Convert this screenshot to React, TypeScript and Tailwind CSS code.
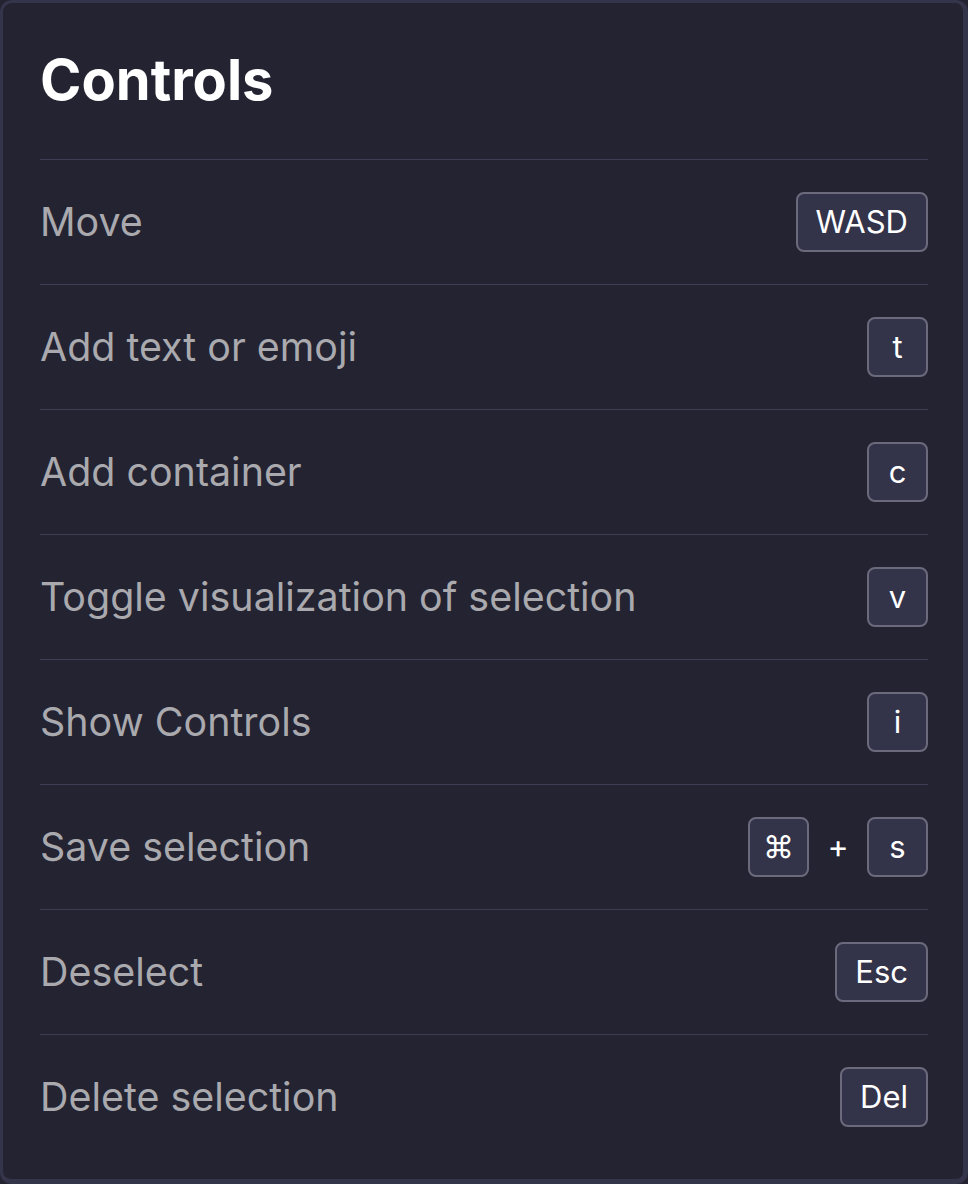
const rows: { label: string; keys: string[] }[] = [
  { label: 'Move', keys: ['WASD'] },
  { label: 'Add text or emoji', keys: ['t'] },
  { label: 'Add container', keys: ['c'] },
  { label: 'Toggle visualization of selection', keys: ['v'] },
  { label: 'Show Controls', keys: ['i'] },
  { label: 'Save selection', keys: ['⌘', 's'] },
  { label: 'Deselect', keys: ['Esc'] },
  { label: 'Delete selection', keys: ['Del'] },
]

function Key({ children }: { children: string }) {
  const single = children.length === 1
  return (
    <kbd
      className={`flex h-[60px] items-center justify-center rounded-lg border-2 border-[#6b6a7c] bg-[#33334a] font-['Inter',sans-serif] text-[31px] text-white ${
        single ? 'w-[61px]' : 'px-[18px]'
      }`}
    >
      {children}
    </kbd>
  )
}

export default function App() {
  return (
    <div className="h-[1184px] w-[968px] bg-[#232332]">
      <div className="flex h-full flex-col rounded-xl border-t-[3px] border-l-[3px] border-r-[5px] border-b-[5px] border-[#34344b] bg-[#232332] pl-[37px] pr-[35px] font-['Inter',sans-serif]">
        <h1 className="flex h-[156px] items-center pb-[2px] text-[56px] font-bold leading-none text-white">Controls</h1>
        {rows.map((row) => (
          <div key={row.label} className="flex h-[125px] items-center justify-between border-t border-[#3d3d55]">
            <span className="pt-[2px] text-[39.4px] text-[#a9a9ae]">{row.label}</span>
            <div className="flex items-center gap-[17px]">
              {row.keys.map((k, i) => (
                <span key={k} className="flex items-center gap-[17px]">
                  {i > 0 && <span className="w-[24px] text-center text-[32px] text-white">+</span>}
                  <Key>{k}</Key>
                </span>
              ))}
            </div>
          </div>
        ))}
      </div>
    </div>
  )
}
